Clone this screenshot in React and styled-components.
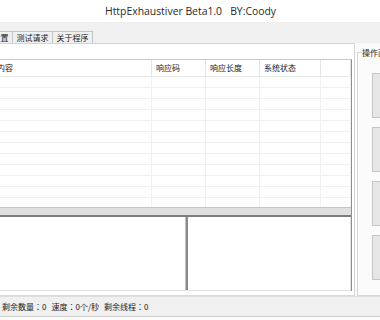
import React from "react";
import styled, { createGlobalStyle } from "styled-components";

const GlobalStyle = createGlobalStyle`
  html, body {
    margin: 0;
    padding: 0;
  }
  body {
    width: 380px;
    height: 320px;
    overflow: hidden;
    background: #f8f8f8;
    font-family: "Noto Sans CJK SC", "Noto Sans", sans-serif;
  }
`;

const Window = styled.div`
  width: 380px;
  height: 320px;
  display: flex;
  flex-direction: column;
  overflow: hidden;
  background: #fbfbfb;
`;

const TitleBar = styled.div`
  height: 22px;
  flex: none;
  display: flex;
  align-items: center;
  justify-content: center;
  padding-left: 1px;
  background: #ffffff;
  color: #2a2a2a;
  font-family: "Open Sans", "Noto Sans", sans-serif;
  font-size: 10.4px;
  white-space: pre;
`;

const TabBand = styled.div`
  height: 21px;
  flex: none;
  display: flex;
  align-items: flex-end;
  background: #f0f0f0;
`;

const TabList = styled.div`
  display: flex;
  margin-left: -28px;
`;

const Tab = styled.div`
  width: 41px;
  height: 12px;
  box-sizing: border-box;
  margin-right: -1px;
  border: 1px solid #c4c4c4;
  border-bottom: none;
  background: #f0f0f0;
  color: #1a1a1a;
  font-size: 8px;
  line-height: 11px;
  text-align: center;
`;

const Body = styled.div`
  flex: none;
  height: 253px;
  display: flex;
`;

const TabPage = styled.div`
  flex: none;
  width: 378px;
  margin-left: -23px;
  box-sizing: border-box;
  padding: 15px 2px 0 0;
  background: #ffffff;
  border-top: 1px solid #d4d4d4;
  border-right: 1px solid #d4d4d4;
  border-bottom: 1px solid #d9d9d9;
`;

const ListView = styled.div`
  border-top: 1px solid #c8c8c8;
  border-right: 1px solid #8e8e8e;
`;

const HeaderRow = styled.div`
  display: flex;
  height: 17px;
  box-sizing: border-box;
  border-bottom: 1px solid #e8e8e8;
`;

const HeaderCell = styled.div`
  flex: ${(p) => (p.$w ? `0 0 ${p.$w}px` : "1")};
  box-sizing: border-box;
  padding-left: 4px;
  border-right: 1px solid #e5e5e5;
  color: #1a1a1a;
  font-size: 8px;
  line-height: 16px;
  white-space: nowrap;
  overflow: hidden;
`;

const Rows = styled.div`
  height: 130px;
  overflow: hidden;
`;

const Row = styled.div`
  display: flex;
  height: 11px;
  box-sizing: border-box;
  border-bottom: 1px solid #f0f0f0;
`;

const Cell = styled.div`
  flex: ${(p) => (p.$w ? `0 0 ${p.$w}px` : "1")};
  box-sizing: border-box;
  border-right: 1px solid #f0f0f0;
`;

const Splitter = styled.div`
  height: 10px;
  box-sizing: border-box;
  border-top: 1px solid #c4c4c4;
  border-bottom: 2px solid #7d7d7d;
  background: #e0e0e0;
`;

const Panels = styled.div`
  display: flex;
  height: 74px;
  box-sizing: border-box;
  border-bottom: 1px solid #e3e3e3;
`;

const Panel = styled.div`
  box-sizing: border-box;
  background: #ffffff;
  ${(p) =>
    p.$left
      ? "flex: 0 0 209px; border-right: 1px solid #c2c2c2;"
      : "flex: 1; border-left: 2px solid #8a8a8a; border-right: 1px solid #e0e0e0;"}
`;

const SidePane = styled.div`
  flex: 1;
  display: flex;
  flex-direction: column;
  padding-left: 2px;
`;

const GroupBox = styled.fieldset`
  flex: 1;
  width: 60px;
  margin: 4px 0 0 0;
  padding: 0;
  border: 1px solid #d6d6d6;
  min-width: 0;
`;

const Caption = styled.legend`
  margin-left: 4px;
  padding: 0;
  color: #1a1a1a;
  font-size: 8px;
  line-height: 11px;
  white-space: nowrap;
`;

const ButtonColumn = styled.div`
  display: flex;
  flex-direction: column;
  gap: 9px;
  padding: 15px 0 0 14px;
`;

const ActionButton = styled.button`
  width: 40px;
  height: 45px;
  padding: 0;
  border: 1px solid #c6c6c6;
  background: #e6e6e6;
`;

const StatusBar = styled.div`
  height: 21px;
  flex: none;
  box-sizing: border-box;
  display: flex;
  align-items: center;
  gap: 5px;
  padding-left: 2px;
  background: #f0f0f0;
  border-top: 1px solid #dedede;
  border-bottom: 1px solid #cfcfcf;
  color: #1a1a1a;
  font-family: "Noto Sans CJK JP", "Noto Sans CJK SC", sans-serif;
  font-size: 8px;
  white-space: pre;
`;

const columns = [
  { title: "请求内容", w: 175 },
  { title: "响应码", w: 54 },
  { title: "响应长度", w: 54 },
  { title: "系统状态", w: 61 },
  { title: "" },
];

const tabs = ["参数设置", "测试请求", "关于程序"];

export default function App() {
  return (
    <Window>
      <GlobalStyle />
      <TitleBar>HttpExhaustiver Beta1.0   BY:Coody</TitleBar>
      <TabBand>
        <TabList>
          {tabs.map((t) => (
            <Tab key={t}>{t}</Tab>
          ))}
        </TabList>
      </TabBand>
      <Body>
        <TabPage>
          <ListView>
            <HeaderRow>
              {columns.map((c, i) => (
                <HeaderCell key={i} $w={c.w}>
                  {c.title}
                </HeaderCell>
              ))}
            </HeaderRow>
            <Rows>
              {Array.from({ length: 12 }).map((_, r) => (
                <Row key={r}>
                  {columns.map((c, i) => (
                    <Cell key={i} $w={c.w} />
                  ))}
                </Row>
              ))}
            </Rows>
            <Splitter />
            <Panels>
              <Panel $left />
              <Panel />
            </Panels>
          </ListView>
        </TabPage>
        <SidePane>
          <GroupBox>
            <Caption>操作面板</Caption>
            <ButtonColumn>
              <ActionButton />
              <ActionButton />
              <ActionButton />
              <ActionButton />
            </ButtonColumn>
          </GroupBox>
        </SidePane>
      </Body>
      <StatusBar>
        <span>剩余数量：0</span>
        <span>速度：0个/秒</span>
        <span>剩余线程：0</span>
      </StatusBar>
    </Window>
  );
}
